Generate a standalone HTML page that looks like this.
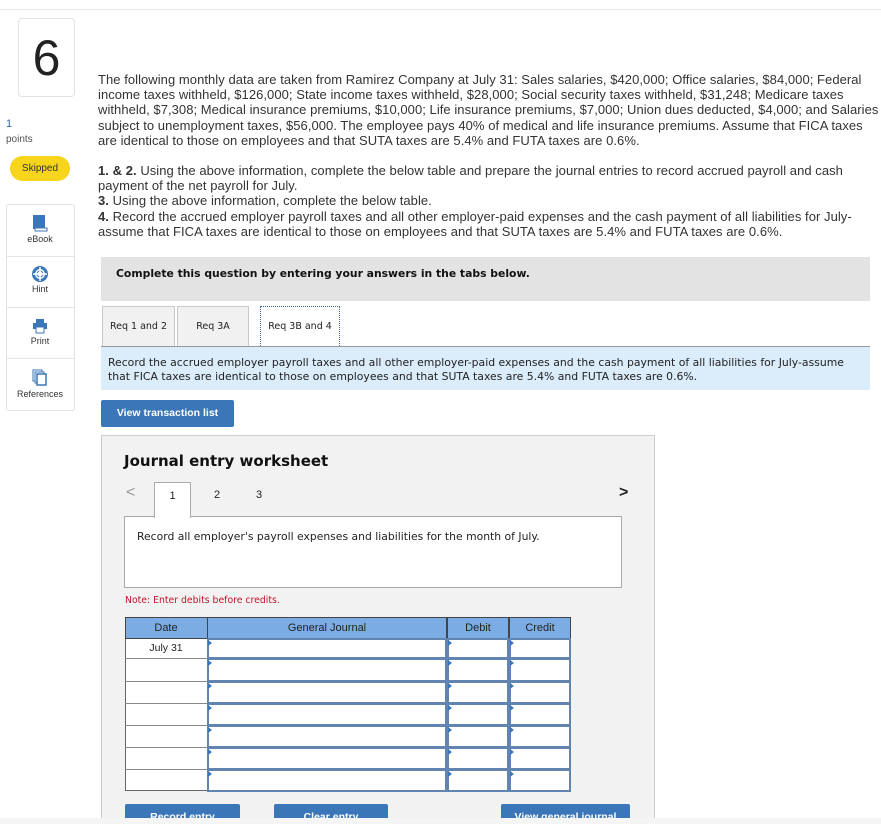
<!DOCTYPE html>
<html><head><meta charset="utf-8"><style>
*{margin:0;padding:0;box-sizing:border-box}
html,body{width:881px;height:824px;overflow:hidden}
body{background:#fff;font-family:"Liberation Sans",sans-serif;color:#333;position:relative}
.a{position:absolute;white-space:nowrap}
.tx{font-size:13px;line-height:15.2px;color:#333;letter-spacing:0.05px}
.tool{position:absolute;left:6px;width:68px;height:51px;border-top:1px solid #e5e5e5;text-align:center;font-size:9px;color:#333}
.tab{position:absolute;top:306px;height:41px;background:#f1f1f1;border:1px solid #c9c9c9;border-bottom:none;font-family:"DejaVu Sans",sans-serif;font-size:9.5px;text-align:center;line-height:40px;color:#222}
.btn{position:absolute;background:#3b76b8;color:#fff;font-weight:bold;font-size:10.5px;text-align:center;border-radius:2px}
.cell{position:absolute;background:#fff;border:2px solid #6284b0}
.tri{position:absolute;width:0;height:0;border-top:3px solid transparent;border-bottom:3px solid transparent;border-left:4px solid #3b76b8}
</style></head><body>
<div class="a" style="left:0;top:9px;width:881px;height:1px;background:#e8e8e8"></div>
<div class="a" style="left:18px;top:18px;width:57px;height:79px;border:1px solid #e3e3e3;border-radius:4px;text-align:center;font-size:50px;line-height:79px;color:#222">6</div>
<div class="a" style="left:6px;top:118px;font-size:11px;color:#2d6ab0">1</div>
<div class="a" style="left:6px;top:134px;font-size:10px;color:#555">points</div>
<div class="a" style="left:10px;top:156px;width:60px;height:25px;border-radius:13px;background:#f7d51d;font-size:10px;text-align:center;line-height:25px;color:#333">Skipped</div>
<div class="a" style="left:6px;top:204px;width:69px;height:207px;border:1px solid #e3e3e3;border-radius:3px"></div>
<div class="tool" style="top:205px;border-top:none"><svg width="16" height="18" style="margin-top:9px" viewBox="0 0 16 18"><rect x="1" y="1" width="12" height="14" fill="#3b76b8"/><rect x="3" y="14" width="12" height="3" fill="#fff" stroke="#3b76b8"/></svg><div>eBook</div></div>
<div class="tool" style="top:256px"><svg width="16" height="16" style="margin-top:9px" viewBox="0 0 16 16"><circle cx="8" cy="8" r="6.5" fill="none" stroke="#3b76b8" stroke-width="3"/><circle cx="8" cy="8" r="3" fill="#fff" stroke="#3b76b8"/><path d="M8 1v14M1 8h14" stroke="#fff" stroke-width="1.5"/></svg><div>Hint</div></div>
<div class="tool" style="top:307px"><svg width="16" height="16" style="margin-top:10px" viewBox="0 0 16 16"><rect x="4" y="1" width="8" height="4" fill="#3b76b8"/><rect x="1" y="5" width="14" height="6" fill="#3b76b8"/><rect x="4" y="9" width="8" height="6" fill="#fff" stroke="#3b76b8"/></svg><div>Print</div></div>
<div class="tool" style="top:358px"><svg width="16" height="18" style="margin-top:10px" viewBox="0 0 16 18"><rect x="1" y="1" width="9" height="11" fill="#fff" stroke="#3b76b8"/><rect x="3" y="3" width="9" height="11" fill="#fff" stroke="#3b76b8"/><rect x="5" y="5" width="9" height="11" fill="#fff" stroke="#3b76b8" stroke-width="1.5"/></svg><div>References</div></div>

<div class="a tx" style="left:98px;top:72px">The following monthly data are taken from Ramirez Company at July 31: Sales salaries, $420,000; Office salaries, $84,000; Federal<br>income taxes withheld, $126,000; State income taxes withheld, $28,000; Social security taxes withheld, $31,248; Medicare taxes<br>withheld, $7,308; Medical insurance premiums, $10,000; Life insurance premiums, $7,000; Union dues deducted, $4,000; and Salaries<br>subject to unemployment taxes, $56,000. The employee pays 40% of medical and life insurance premiums. Assume that FICA taxes<br>are identical to those on employees and that SUTA taxes are 5.4% and FUTA taxes are 0.6%.</div>
<div class="a tx" style="left:98px;top:163px"><b>1. &amp; 2.</b> Using the above information, complete the below table and prepare the journal entries to record accrued payroll and cash<br>payment of the net payroll for July.<br><b>3.</b> Using the above information, complete the below table.<br><b>4.</b> Record the accrued employer payroll taxes and all other employer-paid expenses and the cash payment of all liabilities for July-<br>assume that FICA taxes are identical to those on employees and that SUTA taxes are 5.4% and FUTA taxes are 0.6%.</div>

<div class="a" style="left:101px;top:257px;width:769px;height:44px;background:#e3e3e3"></div>
<div class="a" style="left:116px;top:267px;font-family:'DejaVu Sans',sans-serif;font-weight:bold;font-size:10.8px;color:#111">Complete this question by entering your answers in the tabs below.</div>

<div class="tab" style="left:102px;width:73px">Req 1 and 2</div>
<div class="tab" style="left:177px;width:72px">Req 3A</div>
<div class="tab" style="left:260px;width:80px;background:#fff;border:1px dotted #3b6aa0;border-bottom:none;height:42px">Req 3B and 4</div>
<div class="a" style="left:101px;top:346px;width:769px;height:1px;background:#999"></div>
<div class="a" style="left:101px;top:347px;width:769px;height:43px;background:#dbecfa"></div>
<div class="a" style="left:108px;top:356px;font-family:'DejaVu Sans',sans-serif;font-size:10.85px;line-height:14px;color:#222">Record the accrued employer payroll taxes and all other employer-paid expenses and the cash payment of all liabilities for July-assume<br>that FICA taxes are identical to those on employees and that SUTA taxes are 5.4% and FUTA taxes are 0.6%.</div>

<div class="btn" style="left:101px;top:400px;width:133px;height:27px;line-height:27px">View transaction list</div>

<div class="a" style="left:101px;top:435px;width:554px;height:400px;background:#f2f2f2;border:1px solid #ccc"></div>
<div class="a" style="left:124px;top:452px;font-family:'DejaVu Sans',sans-serif;font-weight:bold;font-size:15px;color:#111">Journal entry worksheet</div>
<div class="a" style="left:126px;top:484px;font-size:16px;color:#999">&lt;</div>
<div class="a" style="left:154px;top:482px;width:37px;height:36px;background:#fff;border:1px solid #aaa;border-bottom:none;z-index:2;text-align:center;font-size:11px;line-height:26px;color:#222">1</div>
<div class="a" style="left:214px;top:489px;font-size:11px;color:#222">2</div>
<div class="a" style="left:256px;top:489px;font-size:11px;color:#222">3</div>
<div class="a" style="left:619px;top:484px;font-size:16px;color:#222;font-weight:bold">&gt;</div>
<div class="a" style="left:124px;top:516px;width:498px;height:72px;background:#fff;border:1px solid #aaa"></div>
<div class="a" style="left:137px;top:530px;font-family:'DejaVu Sans',sans-serif;font-size:10.8px;color:#222">Record all employer's payroll expenses and liabilities for the month of July.</div>
<div class="a" style="left:125px;top:595px;font-family:'DejaVu Sans',sans-serif;font-size:9.3px;color:#c0152a">Note: Enter debits before credits.</div>

<div class="a" style="left:125px;top:617px;width:446px;height:174px;background:#fff;border:1px solid #666"></div>
<div class="a" style="left:125px;top:617px;width:446px;height:22px;background:#7badE4;border:1px solid #444"></div>
<div class="a" style="left:125px;top:622px;width:82px;text-align:center;font-size:11px;color:#222">Date</div>
<div class="a" style="left:207px;top:622px;width:240px;text-align:center;font-size:11px;color:#222">General Journal</div>
<div class="a" style="left:447px;top:622px;width:62px;text-align:center;font-size:11px;color:#222">Debit</div>
<div class="a" style="left:509px;top:622px;width:62px;text-align:center;font-size:11px;color:#222">Credit</div>
<div class="a" style="left:207px;top:617px;width:1px;height:174px;background:#444"></div>
<div class="a" style="left:446px;top:617px;width:2px;height:22px;background:#444"></div>
<div class="a" style="left:508px;top:617px;width:2px;height:22px;background:#444"></div>
<div class="a" style="left:125px;top:642px;width:82px;text-align:center;font-size:10.5px;color:#222">July 31</div>

<div id="rows"></div>
<script>
var ys=[638,658,681,703,725,747,769],h=[20,23,22,22,22,22,22];
var out='';
for(var i=0;i<7;i++){var y=ys[i],hh=h[i];
if(i>0)out+='<div class="a" style="left:125px;top:'+y+'px;width:82px;height:1px;background:#888"></div>';
[[207,240],[447,62],[509,62]].forEach(function(c){out+='<div class="cell" style="left:'+c[0]+'px;top:'+y+'px;width:'+c[1]+'px;height:'+(hh+1)+'px"></div><div class="tri" style="left:'+(c[0]+1)+'px;top:'+(y+2)+'px"></div>';});}
document.getElementById('rows').innerHTML=out;
</script>

<div class="btn" style="left:125px;top:804px;width:115px;height:26px;line-height:26px">Record entry</div>
<div class="btn" style="left:274px;top:804px;width:114px;height:26px;line-height:26px">Clear entry</div>
<div class="btn" style="left:501px;top:804px;width:129px;height:26px;line-height:26px">View general journal</div>
<div class="a" style="left:0;top:818px;width:881px;height:6px;background:#f5f5f5"></div>
</body></html>
